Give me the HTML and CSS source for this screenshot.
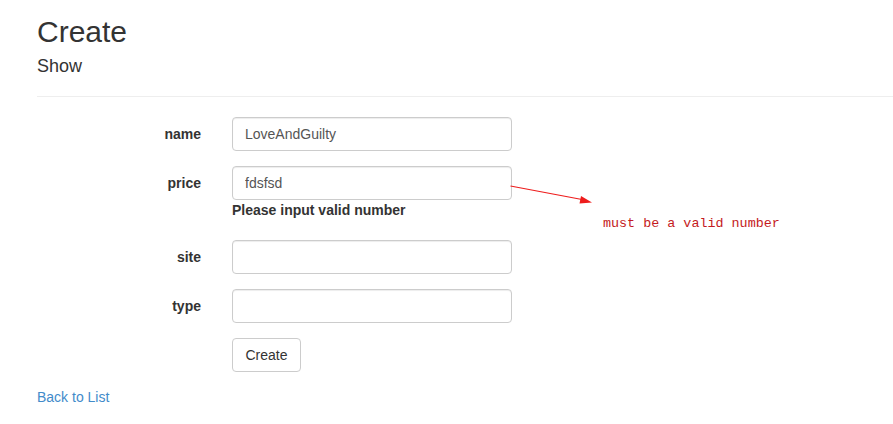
FILE: index.html
```html
<!DOCTYPE html>
<html>
<head>
<meta charset="utf-8">
<title>Create</title>
<link rel="stylesheet" href="styles.css">
</head>
<body>
<div class="page">
  <h2 class="title">Create</h2>
  <h4 class="subtitle">Show</h4>
  <hr class="divider">
  <form class="form">
    <div class="group">
      <label class="label">name</label>
      <div class="field"><input class="input" type="text" value="LoveAndGuilty"></div>
    </div>
    <div class="group">
      <label class="label">price</label>
      <div class="field">
        <input class="input" type="text" value="fdsfsd">
        <div class="help">Please input valid number</div>
      </div>
    </div>
    <div class="group">
      <label class="label">site</label>
      <div class="field"><input class="input" type="text"></div>
    </div>
    <div class="group">
      <label class="label">type</label>
      <div class="field"><input class="input" type="text"></div>
    </div>
    <div class="group">
      <span class="label"></span>
      <div class="field"><button class="btn" type="button">Create</button></div>
    </div>
  </form>
  <a class="back" href="#">Back to List</a>
</div>
<div class="note">
  <svg class="arrow" width="100" height="24" viewBox="0 0 100 24">
    <line x1="0.5" y1="2" x2="72" y2="15.5" stroke="#ee1c1c" stroke-width="1.2"/>
    <polygon points="82,18.5 69.5,19.5 71,12" fill="#ee1c1c"/>
  </svg>
  <span class="note-text">must be a valid number</span>
</div>
</body>
</html>
```
FILE: styles.css
```css
html, body {
  margin: 0;
  padding: 0;
  background: #fff;
}
body {
  font-family: "Liberation Sans", Arial, Helvetica, sans-serif;
  font-size: 14px;
  line-height: 20px;
  color: #333;
  position: relative;
}
.page {
  padding-left: 37px;
}
.title {
  margin: 15px 0 0;
  font-size: 30px;
  line-height: 33px;
  font-weight: 500;
}
.subtitle {
  margin: 8px 0 0;
  font-size: 18px;
  line-height: 20px;
  font-weight: 500;
}
.divider {
  margin: 20px 0 20px;
  border: 0;
  border-top: 1px solid #eee;
  height: 0;
}
.form {
  margin: 0;
}
.group {
  display: grid;
  grid-template-columns: 164px 280px;
  column-gap: 31px;
  margin-bottom: 15px;
}
.label {
  text-align: right;
  font-weight: bold;
  padding-top: 7px;
}
.field {
  display: flex;
  flex-direction: column;
  align-items: flex-start;
}
.input {
  box-sizing: border-box;
  width: 280px;
  height: 34px;
  padding: 6px 12px;
  border: 1px solid #ccc;
  border-radius: 4px;
  font-family: inherit;
  font-size: 14px;
  color: #555;
  box-shadow: inset 0 1px 1px rgba(0,0,0,0.075);
  margin: 0;
}
.help {
  font-weight: bold;
  color: #333;
  margin-bottom: 5px;
}
.btn {
  box-sizing: border-box;
  height: 34px;
  padding: 6px 12px;
  border: 1px solid #ccc;
  border-radius: 4px;
  background: #fff;
  font-family: inherit;
  font-size: 14px;
  line-height: 20px;
  color: #333;
  width: 69px;
}
.back {
  display: block;
  color: #428bca;
  text-decoration: none;
  width: max-content;
}
.note {
  position: absolute;
  left: 510px;
  top: 184px;
  width: 280px;
}
.arrow {
  display: block;
}
.note-text {
  position: absolute;
  left: 93px;
  top: 32px;
  font-family: "Liberation Mono", "DejaVu Sans Mono", monospace;
  font-size: 13.4px;
  line-height: 16px;
  color: #c41a22;
  white-space: nowrap;
}
```
